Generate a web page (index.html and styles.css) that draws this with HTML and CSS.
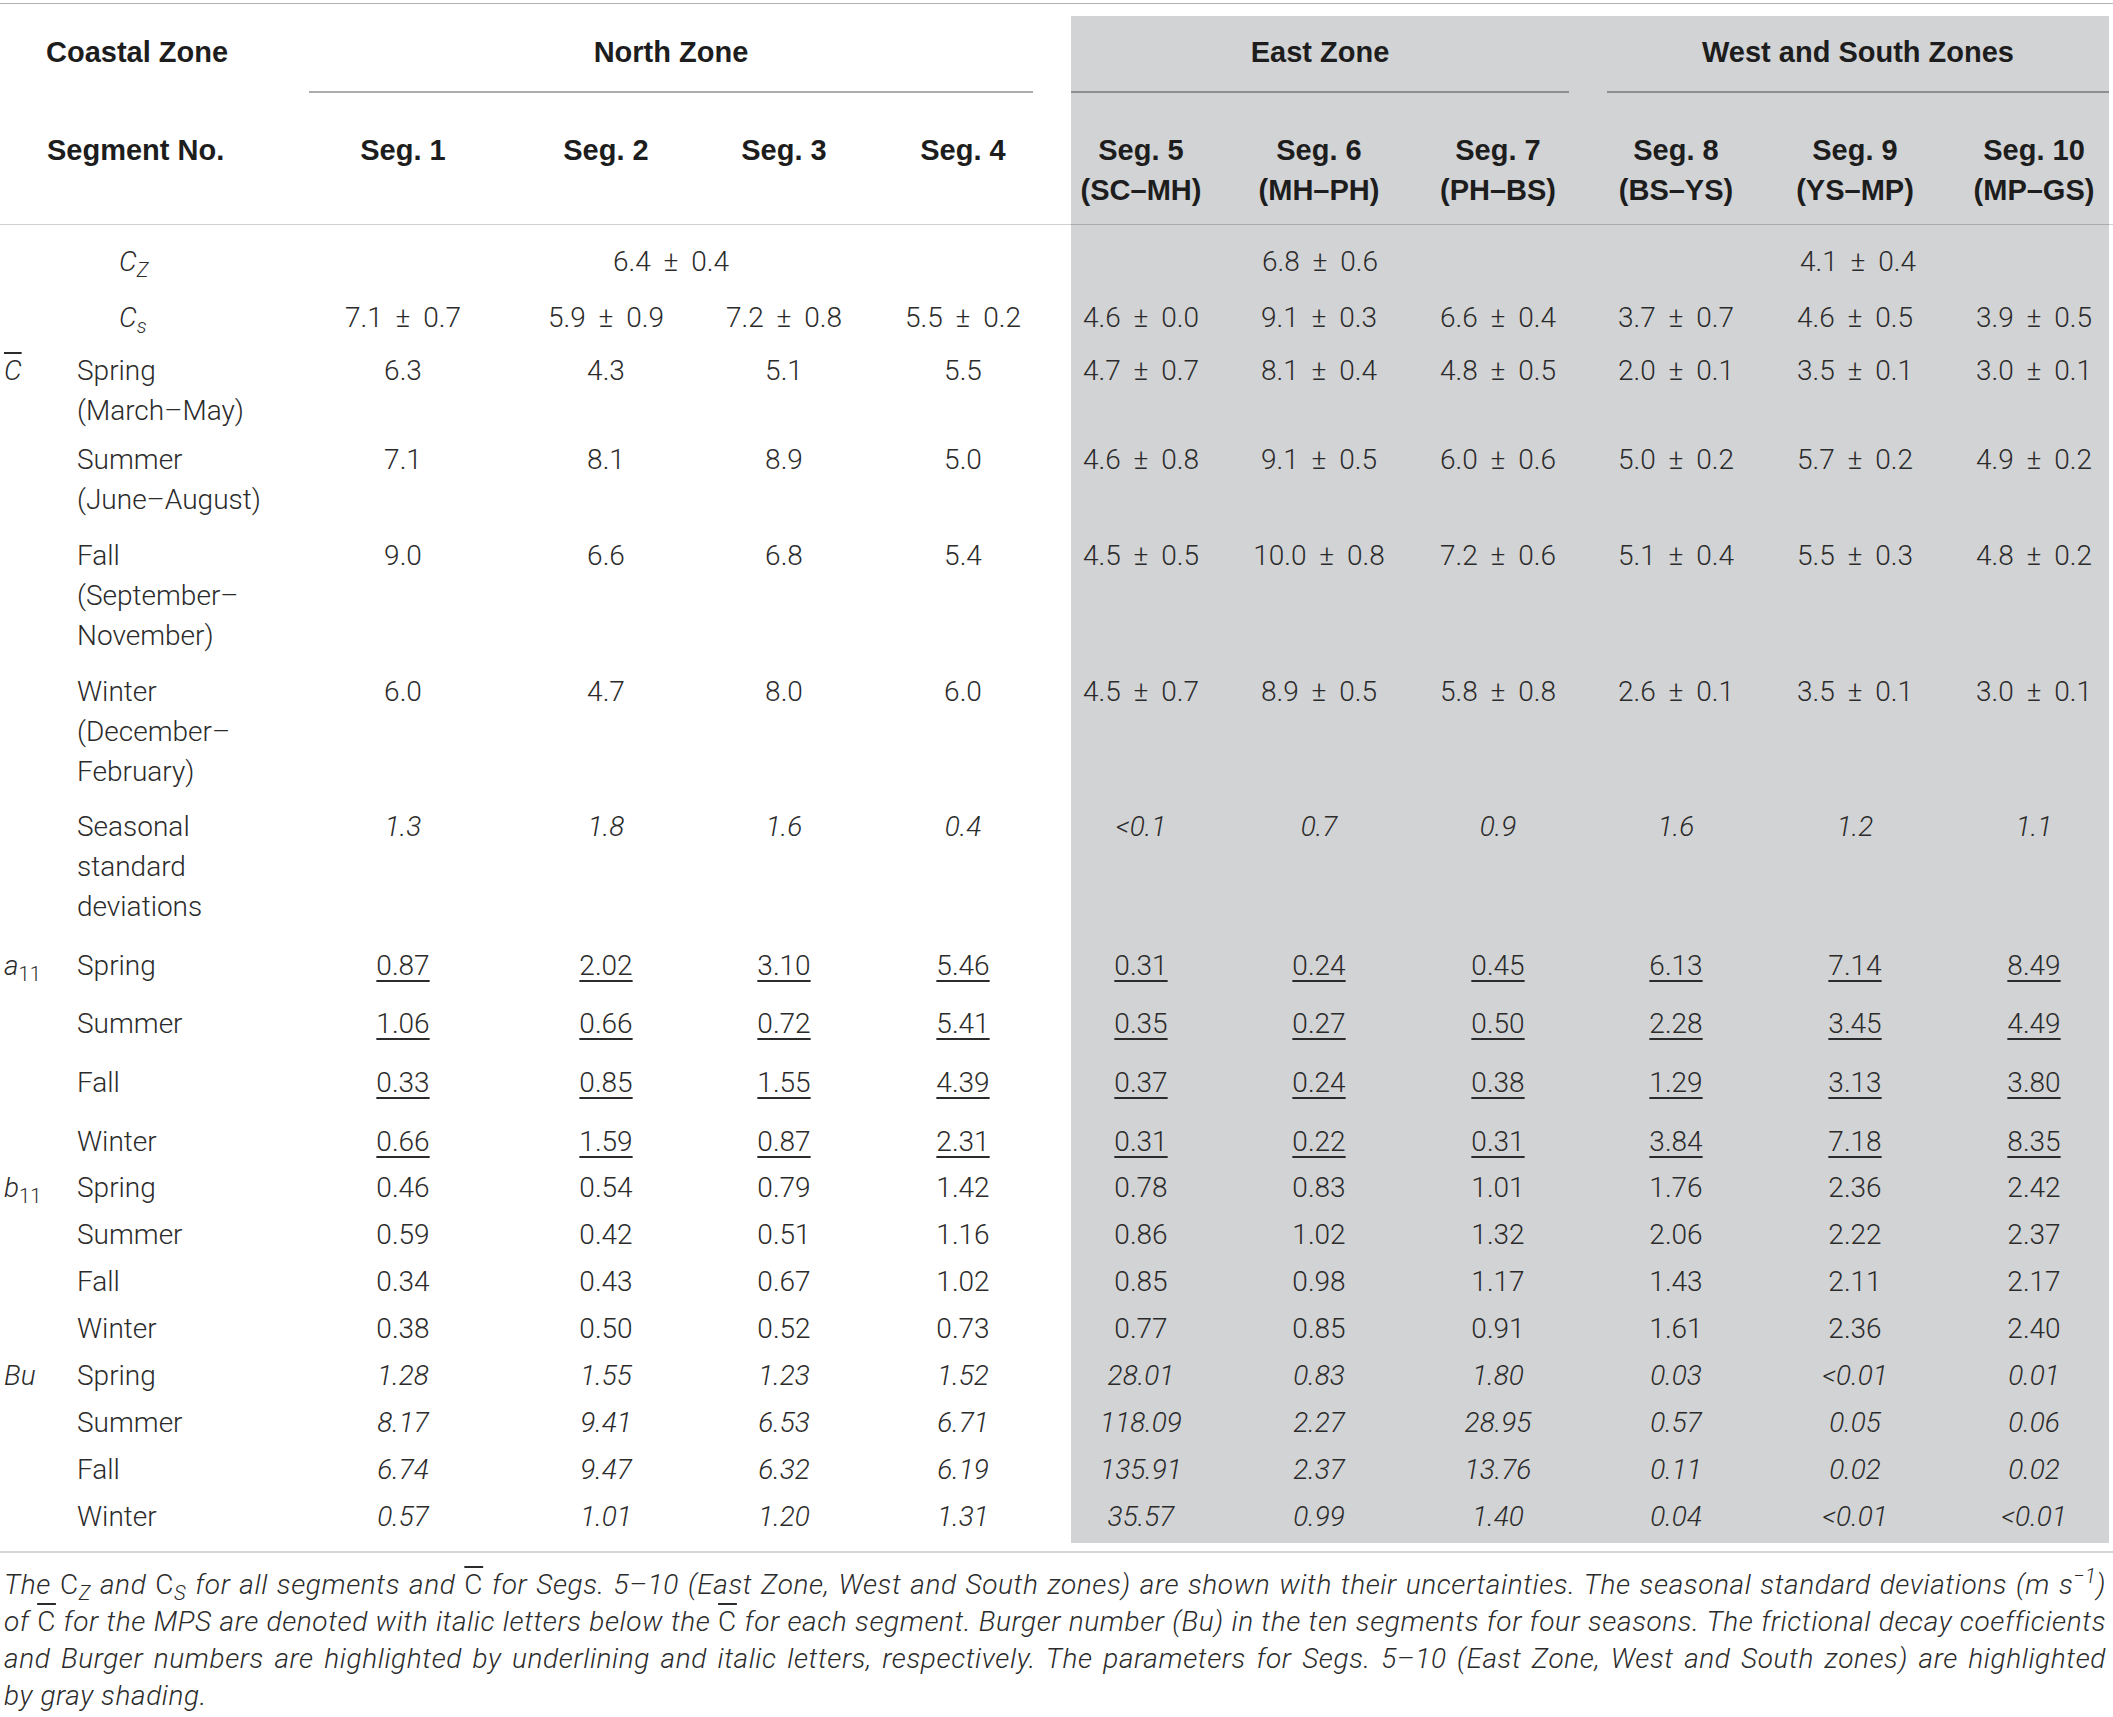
FILE: index.html
```html
<!DOCTYPE html>
<html lang="en">
<head>
<meta charset="utf-8">
<title>Table</title>
<link rel="stylesheet" href="styles.css">
</head>
<body>
<div class="page">
  <div class="topline"></div>
  <div class="tbl">
    <div class="row h1">
      <div class="cz">Coastal Zone</div>
      <div class="zn zn-n">North Zone</div>
      <div class="zn zn-e">East Zone</div>
      <div class="zn zn-w">West and South Zones</div>
    </div>
    <div class="row h2">
      <div class="sn">Segment No.</div>
      <div class="sg">Seg. 1</div>
      <div class="sg">Seg. 2</div>
      <div class="sg">Seg. 3</div>
      <div class="sg">Seg. 4</div>
      <div class="sg">Seg. 5<br>(SC–MH)</div>
      <div class="sg">Seg. 6<br>(MH–PH)</div>
      <div class="sg">Seg. 7<br>(PH–BS)</div>
      <div class="sg">Seg. 8<br>(BS–YS)</div>
      <div class="sg">Seg. 9<br>(YS–MP)</div>
      <div class="sg">Seg. 10<br>(MP–GS)</div>
    </div>

    <div class="row pm r-cz">
      <div class="g"></div>
      <div class="l ind"><i>C</i><sub class="it">Z</sub></div>
      <div class="v sp-n">6.4 ± 0.4</div>
      <div class="v sp-e">6.8 ± 0.6</div>
      <div class="v sp-w">4.1 ± 0.4</div>
    </div>
    <div class="row pm r-cs">
      <div class="g"></div>
      <div class="l ind"><i>C</i><sub class="it">s</sub></div>
      <div class="v">7.1 ± 0.7</div><div class="v">5.9 ± 0.9</div><div class="v">7.2 ± 0.8</div><div class="v">5.5 ± 0.2</div>
      <div class="v">4.6 ± 0.0</div><div class="v">9.1 ± 0.3</div><div class="v">6.6 ± 0.4</div><div class="v">3.7 ± 0.7</div><div class="v">4.6 ± 0.5</div><div class="v">3.9 ± 0.5</div>
    </div>
    <div class="row pm r-sp">
      <div class="g"><i class="cbar">C</i></div>
      <div class="l">Spring<br>(March–May)</div>
      <div class="v">6.3</div><div class="v">4.3</div><div class="v">5.1</div><div class="v">5.5</div>
      <div class="v">4.7 ± 0.7</div><div class="v">8.1 ± 0.4</div><div class="v">4.8 ± 0.5</div><div class="v">2.0 ± 0.1</div><div class="v">3.5 ± 0.1</div><div class="v">3.0 ± 0.1</div>
    </div>
    <div class="row pm r-su">
      <div class="g"></div>
      <div class="l">Summer<br>(June–August)</div>
      <div class="v">7.1</div><div class="v">8.1</div><div class="v">8.9</div><div class="v">5.0</div>
      <div class="v">4.6 ± 0.8</div><div class="v">9.1 ± 0.5</div><div class="v">6.0 ± 0.6</div><div class="v">5.0 ± 0.2</div><div class="v">5.7 ± 0.2</div><div class="v">4.9 ± 0.2</div>
    </div>
    <div class="row pm r-fa">
      <div class="g"></div>
      <div class="l">Fall<br>(September–<br>November)</div>
      <div class="v">9.0</div><div class="v">6.6</div><div class="v">6.8</div><div class="v">5.4</div>
      <div class="v">4.5 ± 0.5</div><div class="v">10.0 ± 0.8</div><div class="v">7.2 ± 0.6</div><div class="v">5.1 ± 0.4</div><div class="v">5.5 ± 0.3</div><div class="v">4.8 ± 0.2</div>
    </div>
    <div class="row pm r-wi">
      <div class="g"></div>
      <div class="l">Winter<br>(December–<br>February)</div>
      <div class="v">6.0</div><div class="v">4.7</div><div class="v">8.0</div><div class="v">6.0</div>
      <div class="v">4.5 ± 0.7</div><div class="v">8.9 ± 0.5</div><div class="v">5.8 ± 0.8</div><div class="v">2.6 ± 0.1</div><div class="v">3.5 ± 0.1</div><div class="v">3.0 ± 0.1</div>
    </div>
    <div class="row r-sd italic-vals">
      <div class="g"></div>
      <div class="l">Seasonal<br>standard<br>deviations</div>
      <div class="v">1.3</div><div class="v">1.8</div><div class="v">1.6</div><div class="v">0.4</div>
      <div class="v">&lt;0.1</div><div class="v">0.7</div><div class="v">0.9</div><div class="v">1.6</div><div class="v">1.2</div><div class="v">1.1</div>
    </div>

    <div class="row ra ra-first ul-vals">
      <div class="g"><i>a</i><sub>11</sub></div>
      <div class="l">Spring</div>
      <div class="v"><u>0.87</u></div><div class="v"><u>2.02</u></div><div class="v"><u>3.10</u></div><div class="v"><u>5.46</u></div>
      <div class="v"><u>0.31</u></div><div class="v"><u>0.24</u></div><div class="v"><u>0.45</u></div><div class="v"><u>6.13</u></div><div class="v"><u>7.14</u></div><div class="v"><u>8.49</u></div>
    </div>
    <div class="row ra ul-vals">
      <div class="g"></div>
      <div class="l">Summer</div>
      <div class="v"><u>1.06</u></div><div class="v"><u>0.66</u></div><div class="v"><u>0.72</u></div><div class="v"><u>5.41</u></div>
      <div class="v"><u>0.35</u></div><div class="v"><u>0.27</u></div><div class="v"><u>0.50</u></div><div class="v"><u>2.28</u></div><div class="v"><u>3.45</u></div><div class="v"><u>4.49</u></div>
    </div>
    <div class="row ra ul-vals">
      <div class="g"></div>
      <div class="l">Fall</div>
      <div class="v"><u>0.33</u></div><div class="v"><u>0.85</u></div><div class="v"><u>1.55</u></div><div class="v"><u>4.39</u></div>
      <div class="v"><u>0.37</u></div><div class="v"><u>0.24</u></div><div class="v"><u>0.38</u></div><div class="v"><u>1.29</u></div><div class="v"><u>3.13</u></div><div class="v"><u>3.80</u></div>
    </div>
    <div class="row ra ra-last ul-vals">
      <div class="g"></div>
      <div class="l">Winter</div>
      <div class="v"><u>0.66</u></div><div class="v"><u>1.59</u></div><div class="v"><u>0.87</u></div><div class="v"><u>2.31</u></div>
      <div class="v"><u>0.31</u></div><div class="v"><u>0.22</u></div><div class="v"><u>0.31</u></div><div class="v"><u>3.84</u></div><div class="v"><u>7.18</u></div><div class="v"><u>8.35</u></div>
    </div>

    <div class="row rb">
      <div class="g"><i>b</i><sub>11</sub></div>
      <div class="l">Spring</div>
      <div class="v">0.46</div><div class="v">0.54</div><div class="v">0.79</div><div class="v">1.42</div>
      <div class="v">0.78</div><div class="v">0.83</div><div class="v">1.01</div><div class="v">1.76</div><div class="v">2.36</div><div class="v">2.42</div>
    </div>
    <div class="row rb">
      <div class="g"></div>
      <div class="l">Summer</div>
      <div class="v">0.59</div><div class="v">0.42</div><div class="v">0.51</div><div class="v">1.16</div>
      <div class="v">0.86</div><div class="v">1.02</div><div class="v">1.32</div><div class="v">2.06</div><div class="v">2.22</div><div class="v">2.37</div>
    </div>
    <div class="row rb">
      <div class="g"></div>
      <div class="l">Fall</div>
      <div class="v">0.34</div><div class="v">0.43</div><div class="v">0.67</div><div class="v">1.02</div>
      <div class="v">0.85</div><div class="v">0.98</div><div class="v">1.17</div><div class="v">1.43</div><div class="v">2.11</div><div class="v">2.17</div>
    </div>
    <div class="row rb">
      <div class="g"></div>
      <div class="l">Winter</div>
      <div class="v">0.38</div><div class="v">0.50</div><div class="v">0.52</div><div class="v">0.73</div>
      <div class="v">0.77</div><div class="v">0.85</div><div class="v">0.91</div><div class="v">1.61</div><div class="v">2.36</div><div class="v">2.40</div>
    </div>

    <div class="row rb italic-vals">
      <div class="g"><i>Bu</i></div>
      <div class="l">Spring</div>
      <div class="v">1.28</div><div class="v">1.55</div><div class="v">1.23</div><div class="v">1.52</div>
      <div class="v">28.01</div><div class="v">0.83</div><div class="v">1.80</div><div class="v">0.03</div><div class="v">&lt;0.01</div><div class="v">0.01</div>
    </div>
    <div class="row rb italic-vals">
      <div class="g"></div>
      <div class="l">Summer</div>
      <div class="v">8.17</div><div class="v">9.41</div><div class="v">6.53</div><div class="v">6.71</div>
      <div class="v">118.09</div><div class="v">2.27</div><div class="v">28.95</div><div class="v">0.57</div><div class="v">0.05</div><div class="v">0.06</div>
    </div>
    <div class="row rb italic-vals">
      <div class="g"></div>
      <div class="l">Fall</div>
      <div class="v">6.74</div><div class="v">9.47</div><div class="v">6.32</div><div class="v">6.19</div>
      <div class="v">135.91</div><div class="v">2.37</div><div class="v">13.76</div><div class="v">0.11</div><div class="v">0.02</div><div class="v">0.02</div>
    </div>
    <div class="row rb rb-end italic-vals">
      <div class="g"></div>
      <div class="l">Winter</div>
      <div class="v">0.57</div><div class="v">1.01</div><div class="v">1.20</div><div class="v">1.31</div>
      <div class="v">35.57</div><div class="v">0.99</div><div class="v">1.40</div><div class="v">0.04</div><div class="v">&lt;0.01</div><div class="v">&lt;0.01</div>
    </div>
  </div>
  <div class="botline"></div>
  <div class="caption">
    <span class="cl">The <span class="up">C</span><sub>Z</sub> and <span class="up">C</span><sub>S</sub> for all segments and <span class="up cbar">C</span> for Segs. 5–10 (East Zone, West and South zones) are shown with their uncertainties. The seasonal standard deviations (m s<sup>−1</sup>)</span>
    <span class="cl">of <span class="up cbar">C</span> for the MPS are denoted with italic letters below the <span class="up cbar">C</span> for each segment. Burger number (Bu) in the ten segments for four seasons. The frictional decay coefficients</span>
    <span class="cl">and Burger numbers are highlighted by underlining and italic letters, respectively. The parameters for Segs. 5–10 (East Zone, West and South zones) are highlighted</span>
    <span class="cl last">by gray shading.</span>
  </div>
</div>
</body>
</html>
```

FILE: styles.css
```css
html, body {
  margin: 0;
  padding: 0;
  background: #ffffff;
}

body {
  font-family: Roboto, "Liberation Sans", Arial, sans-serif;
  font-weight: 300;
  font-size: 28px;
  color: #2b2b2b;
}

.page {
  width: 2113px;
}

.topline {
  margin-top: 3px;
  border-top: 1px solid #b3b3b3;
}

.tbl {
  margin-top: 12px;
  background: linear-gradient(to right,
    transparent 0, transparent 1071px,
    #d2d3d5 1071px, #d2d3d5 2109px,
    transparent 2109px);
}

.row {
  display: grid;
  grid-template-columns: 70px 209px 248px 158px 198px 160px 196px 160px 198px 158px 200px 158px;
  line-height: 40px;
}

/* header rows */
.h1, .h2 {
  font-family: "Liberation Sans", Arial, sans-serif;
  font-weight: 700;
  font-size: 29px;
  color: #1d1d1d;
}

.h1 {
  padding-top: 16px;
}

.h1 .cz {
  grid-column: span 2;
  padding-left: 46px;
}

.zn {
  text-align: center;
  padding-bottom: 19px;
  border-bottom: 2px solid rgba(0, 0, 0, 0.32);
}

.zn-n {
  grid-column: span 4;
  margin: 0 10px 0 30px;
}

.zn-e {
  grid-column: span 3;
  margin: 0 28px;
}

.zn-w {
  grid-column: span 3;
  margin: 0 4px 0 10px;
}

.h2 {
  padding: 37px 0 14px;
  border-bottom: 1px solid rgba(0, 0, 0, 0.19);
}

.h2 .sn {
  grid-column: span 2;
  padding-left: 47px;
}

.h2 .sg {
  text-align: center;
}

/* body cells */
.g {
  padding-left: 4px;
}

.l {
  padding-left: 7px;
}

.l.ind {
  padding-left: 49px;
}

.v {
  text-align: center;
}

.pm .v {
  word-spacing: 6px;
}

.sp-n {
  grid-column: span 4;
  margin: 0 10px 0 30px;
}

.sp-e {
  grid-column: span 3;
  margin: 0 28px;
}

.sp-w {
  grid-column: span 3;
  margin: 0 4px 0 10px;
}

.italic-vals .v {
  font-style: italic;
}

.ul-vals u {
  text-decoration: underline;
  text-decoration-thickness: 1.5px;
  text-underline-offset: 5px;
}

sub, sup {
  font-size: 0.72em;
  line-height: 0;
}

sub {
  vertical-align: -0.28em;
}

sup {
  vertical-align: 0.55em;
}

.it {
  font-style: italic;
}

.cbar {
  text-decoration: overline;
  text-decoration-thickness: 1.5px;
}

/* row spacing */
.r-cz { padding: 17px 0 8px; }
.r-cs { padding: 8px 0 6px; }
.r-sp { padding: 7px 0 4px; }
.r-su { padding: 5px 0 8px; }
.r-fa { padding: 8px 0 8px; }
.r-wi { padding: 8px 0 7px; }
.r-sd { padding: 8px 0 9px; }

.ra { padding: 10px 0 9px; }
.ra.ra-first { padding-bottom: 8px; }
.ra.ra-last { padding-bottom: 2px; }

.rb { padding: 4px 0 3px; }
.rb.rb-end { padding-bottom: 6px; }

/* bottom rule and caption */
.botline {
  margin-top: 8px;
  border-top: 2px solid #d6d6d6;
}

.caption {
  margin-top: 13px;
  padding: 0 7px 0 4px;
  font-style: italic;
  font-size: 28px;
  line-height: 37px;
  letter-spacing: 0.6px;
}

.cl {
  display: block;
  text-align: justify;
  text-align-last: justify;
}

.cl.last {
  text-align-last: left;
}

.caption .up {
  font-style: normal;
}
```
